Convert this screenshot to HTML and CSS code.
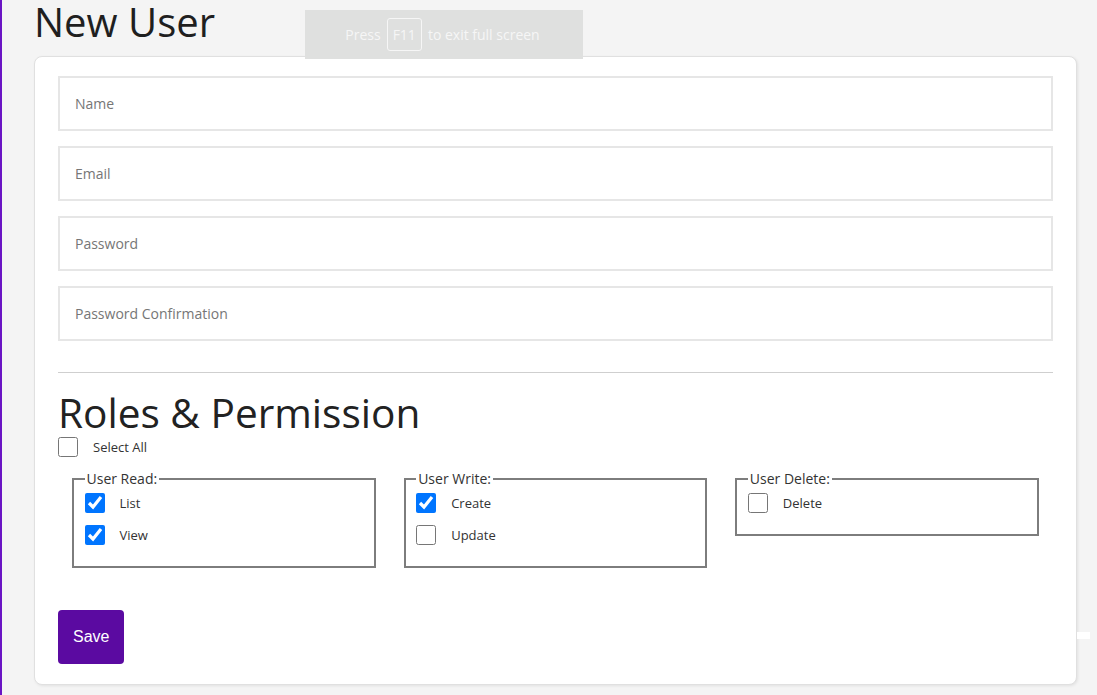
FILE: index.html
```html
<!DOCTYPE html>
<html>
<head>
<meta charset="utf-8">
<title>New User</title>
<link rel="stylesheet" href="styles.css">
</head>
<body>
<div class="page">
  <h1 class="title">New User</h1>
  <form class="card">
    <input class="field" type="text" placeholder="Name">
    <input class="field" type="email" placeholder="Email">
    <input class="field" type="password" placeholder="Password">
    <input class="field" type="password" placeholder="Password Confirmation">
    <hr class="divider">
    <h2 class="section">Roles &amp; Permission</h2>
    <label class="check select-all"><input type="checkbox"><span>Select All</span></label>
    <div class="groups">
      <fieldset class="group">
        <legend>User Read:</legend>
        <label class="check"><input type="checkbox" checked><span>List</span></label>
        <label class="check"><input type="checkbox" checked><span>View</span></label>
      </fieldset>
      <fieldset class="group">
        <legend>User Write:</legend>
        <label class="check"><input type="checkbox" checked><span>Create</span></label>
        <label class="check"><input type="checkbox"><span>Update</span></label>
      </fieldset>
      <fieldset class="group">
        <legend>User Delete:</legend>
        <label class="check"><input type="checkbox"><span>Delete</span></label>
      </fieldset>
    </div>
    <button class="save" type="button">Save</button>
  </form>
</div>
<div class="toast">Press <span class="key">F11</span> to exit full screen</div>
<div class="glitch"></div>
</body>
</html>
```

FILE: styles.css
```css
html, body {
  margin: 0;
  padding: 0;
}
body {
  background: #f4f4f4;
  border-left: 2px solid #6a14c4;
  min-height: 695px;
  box-sizing: border-box;
  font-family: "Open Sans", "Segoe UI", sans-serif;
  color: #222;
}
.page {
  padding: 0 20px 10px 32px;
}
.title {
  margin: 0 0 12px 0;
  font-size: 40px;
  font-weight: 400;
  line-height: 44px;
  color: #1f1f1f;
}
.card {
  display: flex;
  flex-direction: column;
  background: #fff;
  border: 1px solid #e0e0e0;
  border-radius: 8px;
  box-shadow: 1px 1px 3px rgba(0,0,0,0.08);
  padding: 19px 23px 20px 23px;
}
.field {
  height: 55px;
  box-sizing: border-box;
  border: 2px solid #e6e6e6;
  padding: 0 15px;
  margin: 0 0 15px 0;
  font-family: "Open Sans", sans-serif;
  font-size: 14px;
  color: #333;
  outline: none;
}
.field::placeholder {
  color: #767676;
}
.divider {
  border: 0;
  border-top: 1px solid #cfcfcf;
  margin: 16px 0 17px 0;
  height: 0;
}
.section {
  margin: 0;
  font-size: 40.6px;
  font-weight: 400;
  line-height: 46px;
  color: #222;
}
.check {
  display: flex;
  align-items: center;
  gap: 15px;
  font-size: 13px;
  color: #333;
  margin-bottom: 12px;
}
.check input {
  width: 20px;
  height: 20px;
  margin: 0;
}
.select-all {
  margin: 1px 0 0 0;
  gap: 15px;
}
.groups {
  display: grid;
  grid-template-columns: 1fr 1fr 1fr;
  align-items: start;
  margin-top: 12px;
}
.group {
  margin: 0 14px;
  border: 2px solid #7d7d7d;
  padding: 0.35em 0.75em 0.625em;
  font-size: 14px;
  min-width: 0;
}
.group legend {
  padding: 0 2px 0 2px;
  font-size: 14px;
  color: #333;
  line-height: 19px;
}
.save {
  align-self: flex-start;
  margin-top: 42px;
  height: 54px;
  padding: 0 15px;
  background: #5b0aa1;
  color: #fff;
  border: 0;
  border-radius: 4px;
  font-family: "Liberation Sans", Arial, sans-serif;
  font-size: 16px;
}
.toast {
  position: absolute;
  left: 305px;
  top: 10px;
  width: 278px;
  height: 49px;
  box-sizing: border-box;
  background: #dfe0df;
  color: #f6f6f6;
  font-family: "Open Sans", sans-serif;
  font-size: 14px;
  display: flex;
  align-items: center;
  justify-content: center;
  gap: 6px;
  padding-right: 3px;
}
.key {
  border: 1px solid #f6f6f6;
  border-radius: 3px;
  padding: 5px 5px;
  line-height: 21px;
}
.glitch {
  position: absolute;
  left: 1077px;
  top: 632px;
  width: 13px;
  height: 7px;
  background: #fff;
}
```
